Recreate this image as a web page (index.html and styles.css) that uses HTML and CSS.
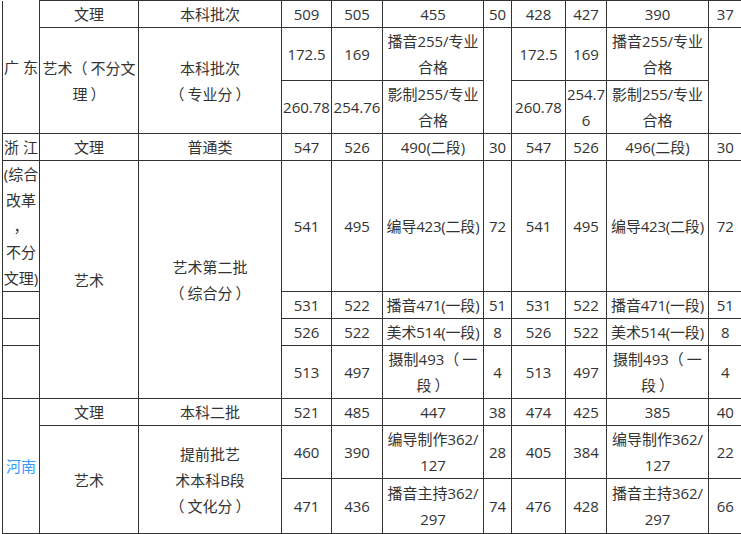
FILE: index.html
```html
<!DOCTYPE html>
<html lang="zh-CN">
<head>
<meta charset="utf-8">
<title>分数线</title>
<link rel="stylesheet" href="styles.css">
</head>
<body>
<table class="scores">
  <colgroup>
    <col class="c-prov"><col class="c-type"><col class="c-batch">
    <col class="c-n1"><col class="c-n2"><col class="c-art"><col class="c-cnt">
    <col class="c-n3"><col class="c-n4"><col class="c-art2"><col class="c-cnt2">
  </colgroup>
  <tbody>
    <tr class="r1">
      <td rowspan="3" class="prov open-top">广 东</td>
      <td>文理</td><td>本科批次</td>
      <td>509</td><td>505</td><td>455</td><td>50</td>
      <td>428</td><td>427</td><td>390</td><td class="end">37</td>
    </tr>
    <tr class="r2">
      <td rowspan="2">艺术<span class="po">（</span>不分文<br>理<span class="pc">）</span></td>
      <td rowspan="2">本科批次<br><span class="po">（</span>专业分<span class="pc">）</span></td>
      <td>172.5</td><td>169</td><td>播音255/专业<br>合格</td><td rowspan="2"></td>
      <td>172.5</td><td>169</td><td>播音255/专业<br>合格</td><td rowspan="2" class="end"></td>
    </tr>
    <tr class="r2">
      <td>260.78</td><td>254.76</td><td>影制255/专业<br>合格</td>
      <td>260.78</td><td class="brk">254.7<br>6</td><td>影制255/专业<br>合格</td>
    </tr>
    <tr class="r1">
      <td class="prov">浙 江</td>
      <td>文理</td><td>普通类</td>
      <td>547</td><td>526</td><td>490(二段)</td><td>30</td>
      <td>547</td><td>526</td><td>496(二段)</td><td class="end">30</td>
    </tr>
    <tr class="r5">
      <td class="prov">(综合<br>改革<br>，<br>不分<br>文理)</td>
      <td rowspan="4">艺术</td>
      <td rowspan="4">艺术第二批<br><span class="po">（</span>综合分<span class="pc">）</span></td>
      <td>541</td><td>495</td><td class="nw">编导423(二段)</td><td>72</td>
      <td>541</td><td>495</td><td class="nw">编导423(二段)</td><td class="end">72</td>
    </tr>
    <tr class="r1">
      <td></td>
      <td>531</td><td>522</td><td class="nw">播音471(一段)</td><td>51</td>
      <td>531</td><td>522</td><td class="nw">播音471(一段)</td><td class="end">51</td>
    </tr>
    <tr class="r1">
      <td></td>
      <td>526</td><td>522</td><td class="nw">美术514(一段)</td><td>8</td>
      <td>526</td><td>522</td><td class="nw">美术514(一段)</td><td class="end">8</td>
    </tr>
    <tr class="r2">
      <td></td>
      <td>513</td><td>497</td><td>摄制493<span class="po">（</span>一<br>段<span class="pc">）</span></td><td>4</td>
      <td>513</td><td>497</td><td>摄制493<span class="po">（</span>一<br>段<span class="pc">）</span></td><td class="end">4</td>
    </tr>
    <tr class="r1">
      <td rowspan="3" class="prov link">河南</td>
      <td>文理</td><td>本科二批</td>
      <td>521</td><td>485</td><td>447</td><td>38</td>
      <td>474</td><td>425</td><td>385</td><td class="end">40</td>
    </tr>
    <tr class="r2">
      <td rowspan="2">艺术</td>
      <td rowspan="2">提前批艺<br>术本科B段<br><span class="po">（</span>文化分<span class="pc">）</span></td>
      <td>460</td><td>390</td><td>编导制作362/<br>127</td><td>28</td>
      <td>405</td><td>384</td><td>编导制作362/<br>127</td><td class="end">22</td>
    </tr>
    <tr class="r11">
      <td>471</td><td>436</td><td>播音主持362/<br>297</td><td>74</td>
      <td>476</td><td>428</td><td>播音主持362/<br>297</td><td class="end">66</td>
    </tr>
  </tbody>
</table>
</body>
</html>
```

FILE: styles.css
```css
html, body {
  margin: 0;
  padding: 0;
  background: #fff;
  overflow: hidden;
}

body {
  height: 534px;
}

.scores {
  margin-left: 2px;
  border-collapse: collapse;
  table-layout: fixed;
  width: 739px;
  font-family: "Open Sans", "Noto Sans CJK SC", sans-serif;
  font-size: 15px;
  line-height: 26px;
  color: #333;
}

.c-prov { width: 37px; }
.c-type { width: 99px; }
.c-batch { width: 143px; }
.c-n1 { width: 50px; }
.c-n2 { width: 51px; }
.c-art { width: 101px; }
.c-cnt { width: 28px; }
.c-n3 { width: 54px; }
.c-n4 { width: 41px; }
.c-art2 { width: 102px; }
.c-cnt2 { width: 33px; }

.scores td {
  border: 1px solid #333;
  padding: 0;
  text-align: center;
  vertical-align: middle;
  overflow-wrap: break-word;
  word-break: break-all;
}

.scores td.end {
  border-right: none;
}

.r1 { height: 27px; }
.r2 { height: 53px; }
.r5 { height: 131px; }
.r11 { height: 55px; }

.scores td.open-top {
  border-top: none;
  padding-top: 1px;
}

.scores td.prov {
  white-space: nowrap;
  text-align: center;
}

.scores td.nw {
  white-space: nowrap;
  word-break: normal;
  letter-spacing: -0.2px;
}

.scores td.link {
  color: #3399ff;
}

.po {
  margin-right: 3px;
}

.pc {
  margin-left: 3px;
}
```
